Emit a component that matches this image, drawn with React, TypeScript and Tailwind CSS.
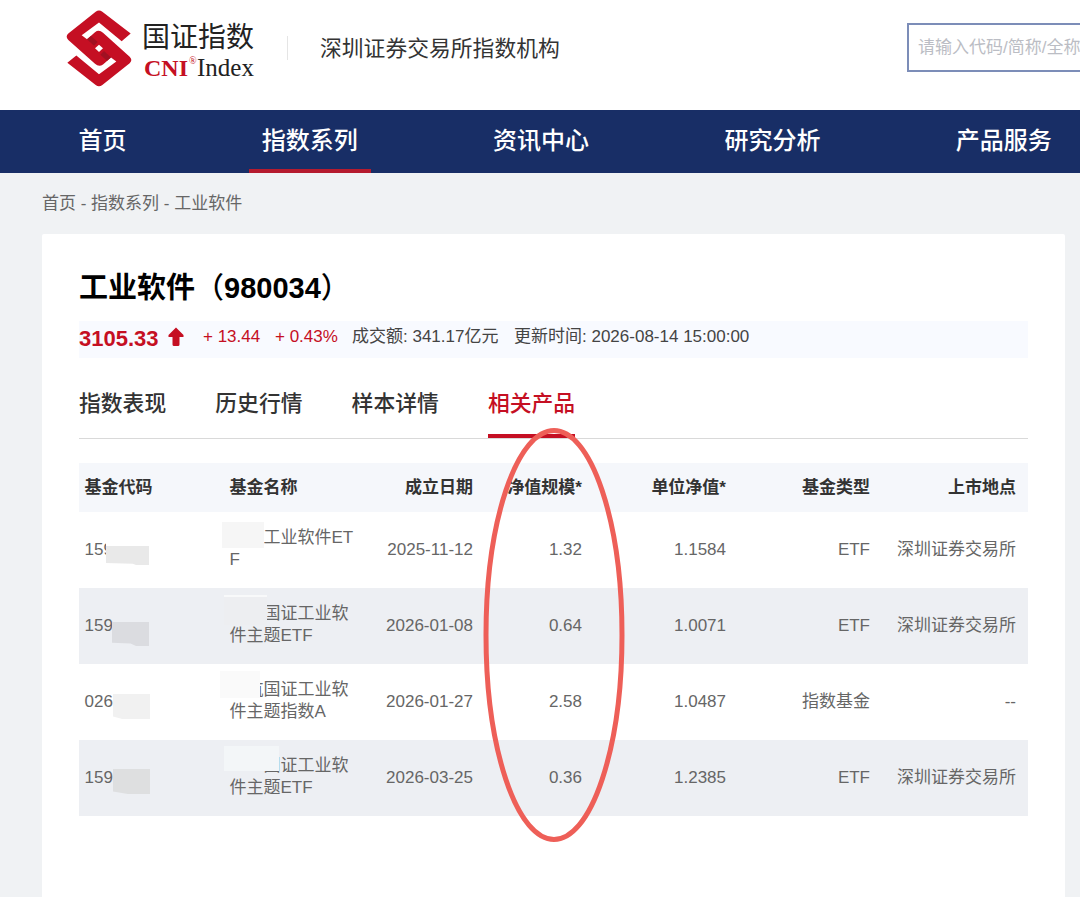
import { clsx } from "clsx";

const FONT = "font-['Liberation_Sans','Noto_Sans_CJK_SC',sans-serif]";

const NAV_ITEMS = ["首页", "指数系列", "资讯中心", "研究分析", "产品服务"];
const TABS = ["指数表现", "历史行情", "样本详情", "相关产品"];

interface Fund {
  code: string;
  name: [string, string];
  date: string;
  scale: string;
  nav: string;
  type: string;
  market: string;
  codeMask: string;
  nameMask: string;
}

const FUNDS: Fund[] = [
  {
    code: "159",
    name: ["工业软件ET", "F"],
    date: "2025-11-12",
    scale: "1.32",
    nav: "1.1584",
    type: "ETF",
    market: "深圳证券交易所",
    codeMask: "left-[27px] top-[26px] h-[27px] w-[43px] border-t-[8px] border-white bg-[#e9e9e9] [clip-path:polygon(0_0,100%_0,100%_100%,70%_100%,62%_95%,0_93%)]",
    nameMask: "left-[143px] top-[10px] h-[26px] w-[42px] bg-[#f6f6f6]",
  },
  {
    code: "159",
    name: ["国证工业软", "件主题ETF"],
    date: "2026-01-08",
    scale: "0.64",
    nav: "1.0071",
    type: "ETF",
    market: "深圳证券交易所",
    codeMask: "left-[33px] top-[34px] h-[24px] w-[37px] bg-[#dbdce0] [clip-path:polygon(0_0,100%_0,100%_100%,65%_100%,50%_90%,0_86%)]",
    nameMask: "left-[145px] top-[7px] h-[30px] w-[43px] border-t-2 border-[#f8f9fa] bg-[#edeef1]",
  },
  {
    code: "026",
    name: ["航国证工业软", "件主题指数A"],
    date: "2026-01-27",
    scale: "2.58",
    nav: "1.0487",
    type: "指数基金",
    market: "--",
    codeMask: "left-[34px] top-[30px] h-[25px] w-[37px] bg-[#f1f1f1] [clip-path:polygon(0_0,100%_0,100%_100%,25%_100%,0_90%)]",
    nameMask: "left-[141px] top-[7px] h-[27px] w-[40px] bg-[#fafafa]",
  },
  {
    code: "159",
    name: ["国证工业软", "件主题ETF"],
    date: "2026-03-25",
    scale: "0.36",
    nav: "1.2385",
    type: "ETF",
    market: "深圳证券交易所",
    codeMask: "left-[34px] top-[29px] h-[25px] w-[37px] bg-[#dedfe0] [clip-path:polygon(0_0,100%_0,100%_100%,40%_100%,0_90%)]",
    nameMask: "left-[145px] top-[6px] h-[25px] w-[55px] bg-[#f3f6f8]",
  },
];

const GRID = "grid grid-cols-[145px_150px_99px_109px_144px_144px_1fr]";

function LogoMark() {
  return (
    <svg className="h-[77px] w-[66px]" viewBox="13 14 198 229" preserveAspectRatio="none">
      <path
        d="M207 84 122 19Q112 12 102 19L20 84Q10 93 20 103L100 174Q112 185 124 176L148 155 164 167 112 205 44 149 17 171 102 237Q112 244 122 237L204 172Q214 163 204 153L124 82Q112 71 100 80L76 101 60 89 112 51 180 107Z"
        fill="#c50f23"
      />
      <path d="M76 101 88 91 108 109 97 120Z" fill="#a01122" />
      <path d="M148 155 136 165 116 147 127 136Z" fill="#a01122" />
      <path d="M112 117 124 128 112 139 100 128Z" fill="#fff" />
    </svg>
  );
}

function Header() {
  return (
    <header className="flex h-[110px] overflow-hidden bg-white">
      <div className="ml-[66px] mt-[10px]">
        <LogoMark />
      </div>
      <div className="ml-[10px] mt-[15px] w-[130px] whitespace-nowrap">
        <div className="font-['Noto_Sans_CJK_SC',sans-serif] text-[28px] leading-[40px] text-[#222]">国证指数</div>
        <div className="flex pl-[2px] font-['Liberation_Serif',serif] text-[24px] leading-[26px]">
          <span className="font-bold text-[#c50f23]">CNI</span>
          <span className="-mt-[7px] ml-px w-[8px] text-[10px] text-[#c50f23]">®</span>
          <span className="text-[25px] text-[#222]">Index</span>
        </div>
      </div>
      <div className="ml-[15px] mt-[36px] h-6 w-px bg-[#e5e5e5]" />
      <div className="ml-[32px] mt-[30px] text-[21.800px] leading-[38px] text-[#333]">深圳证券交易所指数机构</div>
      <div className="ml-auto mt-[23px] h-[49px] w-[173px] overflow-hidden whitespace-nowrap border-2 border-r-0 border-[#7c8db8] pl-[9px] text-[17px] leading-[46px] text-[#bbbdc4]">
        请输入代码/简称/全称
      </div>
    </header>
  );
}

function NavBar() {
  return (
    <nav className="flex h-[63px] gap-[109.300px] overflow-hidden whitespace-nowrap bg-[#182e66] pl-[65.500px] text-[24px] font-medium leading-[62px] text-white">
      {NAV_ITEMS.map((item, i) => (
        <div key={item} className="relative shrink-0 px-[13px]">
          {item}
          {i === 1 && <span className="absolute inset-x-0 bottom-0 h-1 bg-[#b51b2e]" />}
        </div>
      ))}
    </nav>
  );
}

function Quote() {
  return (
    <div className="mt-[13px] flex h-[37px] items-center whitespace-nowrap bg-[#f8faff] pb-[5px] text-[17px] text-[#444]">
      <span className="mt-[3px] w-[89px] text-[22px] font-bold text-[#c50f23]">3105.33</span>
      <svg className="h-5 w-4" viewBox="0 0 16 20" fill="#c50f23">
        <path d="M8 0.500 15.500 8V10H11.500V17.500Q11.500 19 10 19H6Q4.500 19 4.500 17.500V10H0.500V8Z" />
      </svg>
      <span className="ml-[19px] w-[72px] text-[#c50f23]">+ 13.44</span>
      <span className="w-[77px] text-[#c50f23]">+ 0.43%</span>
      <span className="w-[162px]">成交额: 341.17亿元</span>
      <span>更新时间: 2026-08-14 15:00:00</span>
    </div>
  );
}

function FundRow({ fund, striped }: { fund: Fund; striped: boolean }) {
  return (
    <div
      className={clsx(
        GRID,
        "relative h-[76px] items-center pr-[12px] text-[17px] leading-[22px] text-[#666]",
        striped && "bg-[#edeff3]",
      )}
    >
      <span className="pl-[5.500px]">{fund.code}</span>
      <span className="whitespace-nowrap pb-[2px] pl-[5.500px]">
        <span className={clsx("block", fund.name[0].startsWith("航") ? "pl-[17px]" : "pl-[34px]")}>{fund.name[0]}</span>
        <span className="block">{fund.name[1]}</span>
      </span>
      <span className="text-right">{fund.date}</span>
      <span className="text-right">{fund.scale}</span>
      <span className="text-right">{fund.nav}</span>
      <span className="text-right">{fund.type}</span>
      <span className="text-right">{fund.market}</span>
      <span className={clsx("absolute", fund.codeMask)} />
      <span className={clsx("absolute", fund.nameMask)} />
    </div>
  );
}

export default function App() {
  return (
    <div className={clsx(FONT, "relative h-[897px] w-[1080px] overflow-hidden bg-[#f0f2f4]")}>
      <Header />
      <NavBar />
      <div className="h-[61px] pl-[42px] text-[17px] leading-[61px] text-[#666]">首页 - 指数系列 - 工业软件</div>
      <main className="ml-[42px] h-[663px] w-[1023px] rounded-t-xs bg-white px-[37px] pt-[34px]">
        <h1 className="flex h-[40px] text-[29px] font-bold leading-[40px] text-black">
          工业软件<span className="font-medium">（</span>980034<span className="font-medium">）</span>
        </h1>
        <Quote />
        <div className="mt-[22px] flex h-[59px] gap-[49.100px] border-b border-[#d9d9d9] text-[21.800px] font-medium leading-[48px] text-[#333]">
          {TABS.map((tab) => (
            <div key={tab} className={clsx("h-[58px]", tab === "相关产品" && "border-b-4 border-[#c50f23] text-[#c50f23]")}>
              {tab}
            </div>
          ))}
        </div>
        <div className="mt-[24px]">
          <div className={clsx(GRID, "h-[49px] items-center bg-[#f5f7fb] pr-[12px] text-[17px] font-bold text-[#333]")}>
            <span className="pl-[5.500px]">基金代码</span>
            <span className="pl-[5.500px]">基金名称</span>
            <span className="text-right">成立日期</span>
            <span className="text-right">净值规模*</span>
            <span className="text-right">单位净值*</span>
            <span className="text-right">基金类型</span>
            <span className="text-right">上市地点</span>
          </div>
          {FUNDS.map((fund, i) => (
            <FundRow key={fund.date} fund={fund} striped={i % 2 === 1} />
          ))}
        </div>
      </main>
      <svg className="pointer-events-none absolute left-[480px] top-[424px] h-[422px] w-[148px]" viewBox="0 0 148 422" fill="none">
        <ellipse cx="74" cy="211" rx="68" ry="204.500" stroke="#ee5f58" strokeWidth="5" />
      </svg>
    </div>
  );
}
